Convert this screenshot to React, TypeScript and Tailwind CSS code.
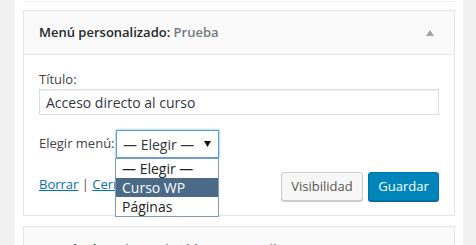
import React from "react";

export default function App() {
  const font = { fontFamily: '"Open Sans", "Noto Sans", sans-serif' };
  return (
    <div className="h-[245px] w-[476px] overflow-hidden bg-[#f1f1f1] flex" style={font}>
      <div className="w-[15px] shrink-0" />
      <div className="w-[448px] shrink-0 bg-white px-2">
        <div className="h-[2px] border-b border-[#f2f2f2]" />
        <div className="mt-[8px] border border-[#e5e5e5] bg-white">
          <div className="h-[44px] bg-[#fafafa] border-b border-[#e5e5e5] flex items-center justify-between pl-[15px] pr-[20px]">
            <div className="text-[13px] font-semibold text-[#23282d] leading-none">
              Menú personalizado:<span className="text-[#72777c]"> Prueba</span>
            </div>
            <svg width="8" height="6" viewBox="0 0 8 6" className="mt-[1px]">
              <polygon points="4,0 8,6 0,6" fill="#a0a5aa" />
            </svg>
          </div>
          <div className="px-[15px] pt-[15px] pb-[14px]">
            <div className="text-[13px] leading-[18px] text-[#444]">Título:</div>
            <div className="mt-[1px] h-[26px] w-[400px] border border-[#ddd] flex items-center px-[6px] text-[14px] text-[#32373c] shadow-[inset_0_1px_2px_rgba(0,0,0,0.07)]">
              Acceso directo al curso
            </div>
            <div className="mt-[15px] flex items-center">
              <span className="text-[13px] text-[#444] w-[77px]">Elegir menú:</span>
              <div className="relative">
                <div className="h-[28px] w-[103px] border border-[#5b9dd9] shadow-[0_0_2px_rgba(30,140,190,0.8)] flex items-center justify-between pl-[6px] pr-[7px] text-[14px] text-[#32373c] bg-white">
                  <span>— Elegir —</span>
                  <svg width="7" height="6" viewBox="0 0 7 6">
                    <polygon points="0,0 7,0 3.5,6" fill="#111" />
                  </svg>
                </div>
                <div className="absolute left-[-1px] top-[28px] z-10 w-[104px] border border-[#7f9db9] bg-white text-[14px] text-[#222] leading-[19px]">
                  <div className="h-[19px] pl-[6px]">— Elegir —</div>
                  <div className="h-[19px] pl-[6px] bg-[#4b6a88] text-white">Curso WP</div>
                  <div className="h-[19px] pl-[6px]">Páginas</div>
                </div>
              </div>
            </div>
            <div className="mt-[14px] flex items-start justify-between">
              <div className="pt-[3px] text-[13px] leading-[18px] text-[#555]">
                <span className="text-[#0073aa] underline">Borrar</span> | <span className="text-[#0073aa] underline">Cerrar</span>
              </div>
              <div className="flex gap-[5px]">
                <div className="h-[29px] w-[82px] rounded-[3px] border border-[#ccc] bg-[#f7f7f7] shadow-[0_1px_0_#ccc] flex items-center justify-center text-[13px] text-[#555]">
                  Visibilidad
                </div>
                <div className="h-[29px] w-[71px] rounded-[3px] border border-[#0073aa] bg-[#0085ba] shadow-[0_1px_0_#006799] flex items-center justify-center text-[13px] text-white">
                  Guardar
                </div>
              </div>
            </div>
          </div>
        </div>
        <div className="mt-[10px] border border-[#e5e5e5]">
          <div className="h-[44px] bg-[#fafafa] flex items-center pl-[15px]">
            <div className="text-[13px] font-semibold text-[#23282d] leading-none">
              Search Plus:<span className="text-[#72777c]"> Sincroniza blog con Email</span>
            </div>
          </div>
        </div>
      </div>
    </div>
  );
}
